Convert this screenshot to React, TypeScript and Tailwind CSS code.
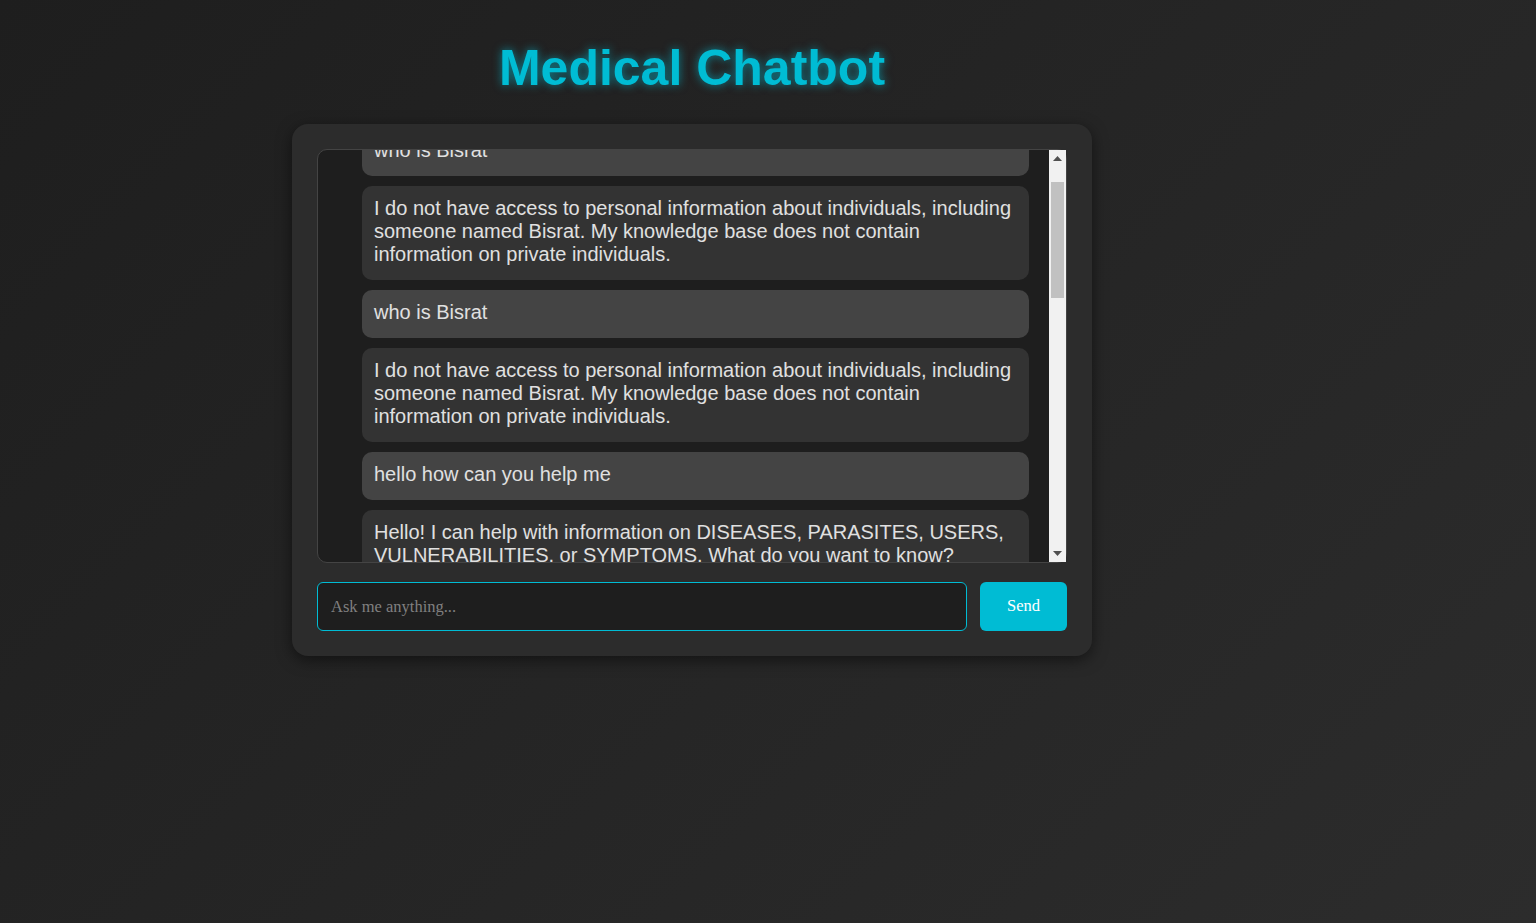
import { useLayoutEffect, useRef } from "react";

type Message = { from: "user" | "bot"; text: string };

const messages: Message[] = [
  { from: "user", text: "who is Bisrat" },
  {
    from: "bot",
    text: "I do not have access to personal information about individuals, including someone named Bisrat. My knowledge base does not contain information on private individuals.",
  },
  { from: "user", text: "who is Bisrat" },
  {
    from: "bot",
    text: "I do not have access to personal information about individuals, including someone named Bisrat. My knowledge base does not contain information on private individuals.",
  },
  { from: "user", text: "hello how can you help me" },
  {
    from: "bot",
    text: "Hello! I can help with information on DISEASES, PARASITES, USERS, VULNERABILITIES, or SYMPTOMS. What do you want to know?",
  },
  { from: "user", text: "what is malaria" },
  {
    from: "bot",
    text: "Malaria is a disease caused by Plasmodium parasites, transmitted to people through the bites of infected female Anopheles mosquitoes. It is preventable and curable.",
  },
  { from: "user", text: "what are the symptoms of malaria" },
  {
    from: "bot",
    text: "Common symptoms of malaria include fever, chills, headache, muscle aches and tiredness. Nausea, vomiting and diarrhea may also occur.",
  },
  { from: "user", text: "how can it be prevented" },
  {
    from: "bot",
    text: "Malaria can be prevented by sleeping under insecticide-treated bed nets, using mosquito repellent, and taking preventive medicine when travelling.",
  },
];

export default function App() {
  const chatRef = useRef<HTMLDivElement>(null);

  useLayoutEffect(() => {
    if (chatRef.current) chatRef.current.scrollTop = 52;
  }, []);

  return (
    <div className="min-h-screen w-full bg-[linear-gradient(135deg,#1e1e1e,#2c2c2c)] font-['Liberation_Sans',Arial,sans-serif]">
      <div className="flex w-[1384px] flex-col items-center pt-[43px]">
        <h1 className="text-[50px] font-bold leading-[50px] text-[#00bcd4] [text-shadow:0_0_10px_rgba(0,188,212,0.65)]">
          Medical Chatbot
        </h1>

        <div className="mt-[31px] w-[800px] rounded-[16px] bg-[#2c2c2c] p-[25px] shadow-[0_4px_15px_rgba(0,0,0,0.5)]">
          <div className="flex h-[414px] rounded-[10px] border border-[#444] bg-[#1e1e1e]">
            <div
              ref={chatRef}
              className="flex-1 overflow-y-scroll rounded-l-[10px] p-[20px] [scrollbar-width:none]"
            >
              {messages.map((m, i) => (
                <div
                  key={i}
                  className={`my-[10px] ml-[24px] rounded-[10px] px-[12px] pt-[11px] pb-[14px] text-[20px] leading-[23px] text-[#e0e0e0] ${
                    m.from === "user" ? "bg-[#444]" : "bg-[#333]"
                  }`}
                >
                  {m.text}
                </div>
              ))}
            </div>

            {/* scrollbar */}
            <div className="flex w-[17px] flex-col bg-[#f1f1f1]">
              <div className="flex h-[17px] items-center justify-center">
                <svg width="9" height="5" viewBox="0 0 9 5">
                  <path d="M4.5 0 L9 5 L0 5 Z" fill="#505050" />
                </svg>
              </div>
              <div className="flex-1 px-[2px] pt-[15px]">
                <div className="h-[116px] bg-[#c1c1c1]" />
              </div>
              <div className="flex h-[17px] items-center justify-center">
                <svg width="9" height="5" viewBox="0 0 9 5">
                  <path d="M0 0 L9 0 L4.5 5 Z" fill="#505050" />
                </svg>
              </div>
            </div>
          </div>

          <div className="mt-[19px] flex gap-[13px]">
            <input
              autoFocus
              type="text"
              placeholder="Ask me anything..."
              className="h-[49px] flex-1 rounded-[6px] border border-[#00bcd4] bg-[#1e1e1e] px-[13px] font-['Liberation_Serif',serif] text-[16.5px] text-white caret-white outline-none placeholder:text-[#808080]"
            />
            <button className="h-[49px] w-[87px] rounded-[6px] bg-[#00bcd4] font-['Liberation_Serif',serif] text-[16.5px] text-white">
              Send
            </button>
          </div>
        </div>
      </div>
    </div>
  );
}
